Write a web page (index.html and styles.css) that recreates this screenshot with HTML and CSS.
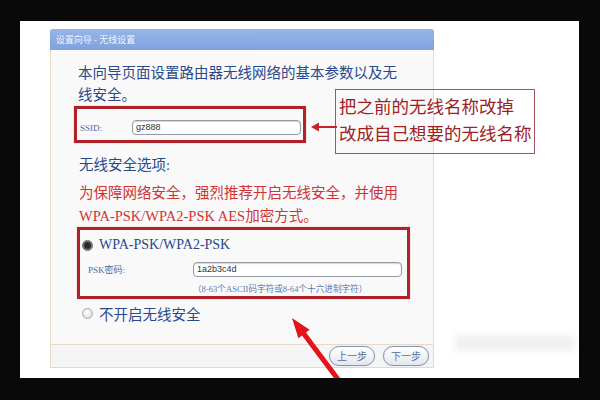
FILE: index.html
```html
<!DOCTYPE html>
<html lang="zh-CN">
<head>
<meta charset="utf-8">
<title>设置向导 - 无线设置</title>
<link rel="stylesheet" href="styles.css">
</head>
<body>
<div class="frame">
  <div class="dialog">
    <div class="titlebar">设置向导 - 无线设置</div>
    <div class="content">
      <p class="intro">本向导页面设置路由器无线网络的基本参数以及无<br>线安全。</p>
      <div class="hl ssid-box">
        <span class="lbl ssid-lbl">SSID:</span>
        <span class="field ssid-field">gz888</span>
      </div>
      <p class="section">无线安全选项:</p>
      <p class="warn">为保障网络安全，强烈推荐开启无线安全，并使用<br>WPA-PSK/WPA2-PSK AES加密方式。</p>
      <div class="hl wpa-box">
        <div class="opt">
          <span class="radio on"></span>
          <span class="opt-text latin">WPA-PSK/WPA2-PSK</span>
        </div>
        <div class="psk-row">
          <span class="lbl psk-lbl">PSK密码:</span>
          <span class="field psk-field">1a2b3c4d</span>
        </div>
        <div class="hint">（8-63个ASCII码字符或8-64个十六进制字符）</div>
      </div>
      <div class="opt opt-off">
        <span class="radio"></span>
        <span class="opt-text">不开启无线安全</span>
      </div>
    </div>
    <div class="footer">
      <span class="btn">上一步</span>
      <span class="btn">下一步</span>
    </div>
  </div>

  <div class="note">把之前的无线名称改掉<br>改成自己想要的无线名称</div>
  <svg class="arrow-small" width="26" height="12" viewBox="0 0 26 12">
    <line x1="6" y1="6" x2="26" y2="6" stroke="#c3262b" stroke-width="2"/>
    <polygon points="0,6 8,1.5 8,10.5" fill="#c3262b"/>
  </svg>
  <svg class="arrow-big" width="100" height="70" viewBox="0 0 100 70">
    <polygon points="12,7 29.6,18.8 26,21.5 68,77.5 64,80.5 22,24.5 18.4,27.2" fill="#e3121b"/>
  </svg>
  <div class="watermark"></div>
</div>
</body>
</html>
```
FILE: styles.css
```css
html, body {
  margin: 0;
  padding: 0;
}
body {
  width: 600px;
  height: 400px;
  background: #090909;
  overflow: hidden;
  font-family: "Liberation Serif", "Noto Sans CJK SC", serif;
}
.frame {
  position: relative;
  margin: 21px 0 0 20px;
  width: 559px;
  height: 357px;
  background: #ffffff;
  overflow: hidden;
  padding: 8px 0 0 30px;
  box-sizing: border-box;
}
.dialog {
  width: 384px;
  height: 339px;
  box-sizing: border-box;
  border: 1px solid #e4d8c6;
  border-top: none;
  border-radius: 3px 3px 0 0;
  background: #f9f9f9;
  display: flex;
  flex-direction: column;
}
.titlebar {
  height: 21px;
  margin: 0 -1px;
  border-radius: 3px 3px 0 0;
  background: linear-gradient(#8caee6, #7399db);
  color: #f2f6ff;
  font-family: "Noto Sans CJK SC", sans-serif;
  font-size: 9px;
  line-height: 21px;
  padding-left: 6px;
  opacity: 0.9;
}
.content {
  flex: 1;
}
p {
  margin: 0;
}
.intro {
  margin-top: 12px;
  padding-left: 27px;
  font-size: 14.5px;
  line-height: 22px;
  color: #29498a;
}
.hl {
  border: 3px solid #b0212a;
  box-sizing: border-box;
  box-shadow: 0 0 1px #e48a8a;
}
.ssid-box {
  margin-left: 23px;
  width: 232px;
  height: 37px;
  display: flex;
  align-items: center;
  padding: 6px 2px 0 3px;
}
.lbl {
  font-size: 9px;
  color: #4d68a6;
}
.ssid-lbl {
  width: 52px;
}
.field {
  display: block;
  box-sizing: border-box;
  height: 15px;
  border: 1px solid #949aa4;
  border-radius: 4px;
  background: #fff;
  box-shadow: inset 0 1px 1px #d6d6d6;
  font-family: "Liberation Sans", sans-serif;
  font-size: 9px;
  line-height: 13px;
  color: #333;
  padding-left: 3px;
}
.ssid-field {
  width: 169px;
}
.section {
  margin-top: 11px;
  padding-left: 28px;
  font-size: 14.5px;
  line-height: 22px;
  color: #29498a;
}
.warn {
  margin-top: 6px;
  padding-left: 28px;
  font-size: 14.5px;
  line-height: 23px;
  color: #cf3434;
}
.wpa-box {
  margin-top: -1px;
  margin-left: 26px;
  width: 333px;
  height: 72px;
  padding-top: 3px;
}
.opt {
  display: flex;
  align-items: center;
  height: 24px;
  padding-left: 2px;
  gap: 6px;
}
.radio {
  width: 11px;
  height: 11px;
  border-radius: 50%;
  box-sizing: border-box;
  border: 1px solid #a8a8a8;
  background: radial-gradient(circle at 45% 40%, #ffffff, #d4d4d4);
}
.radio.on {
  border: 1px solid #6a6a6a;
  background: radial-gradient(circle, #2a2a2a 0 45%, #6e6e6e 62%, #b8b8b8 100%);
}
.opt-text {
  font-size: 14.5px;
  color: #29498a;
}
.opt-text.latin {
  font-size: 14px;
  color: #27478a;
}
.psk-row {
  display: flex;
  align-items: center;
  margin-top: 5px;
  padding-left: 8px;
}
.psk-lbl {
  width: 105px;
}
.psk-field {
  width: 209px;
}
.hint {
  margin-top: 6px;
  padding-left: 113px;
  font-size: 8.6px;
  line-height: 12px;
  color: #5c7ab2;
}
.opt-off {
  margin-top: 2px;
  margin-left: 29px;
}
.footer {
  height: 23px;
  box-sizing: border-box;
  border-top: 1px solid #e6d9c6;
  background: #f5f5f5;
  display: flex;
  justify-content: flex-end;
  align-items: center;
  gap: 8px;
  padding-right: 4px;
}
.btn {
  width: 46px;
  height: 20px;
  box-sizing: border-box;
  border: 1px solid #8494b4;
  border-radius: 10px;
  background: linear-gradient(#ffffff, #e3e7ee);
  box-shadow: 0 0 1px #b8c2d6;
  font-family: "Noto Sans CJK SC", sans-serif;
  font-size: 10px;
  line-height: 18px;
  text-align: center;
  color: #5b6f98;
}
.note {
  position: absolute;
  left: 315px;
  top: 68px;
  width: 200px;
  height: 65px;
  box-sizing: border-box;
  border: 1px solid #a2565a;
  padding: 2px 0 0 3px;
  font-family: "Noto Sans CJK SC", sans-serif;
  font-size: 17.5px;
  line-height: 27px;
  color: #9c2226;
  white-space: nowrap;
}
.arrow-small {
  position: absolute;
  left: 291px;
  top: 100px;
}
.arrow-big {
  position: absolute;
  left: 260px;
  top: 290px;
}
.watermark {
  position: absolute;
  left: 435px;
  top: 314px;
  width: 120px;
  height: 16px;
  background: #f1f1f1;
  filter: blur(3px);
}
```
